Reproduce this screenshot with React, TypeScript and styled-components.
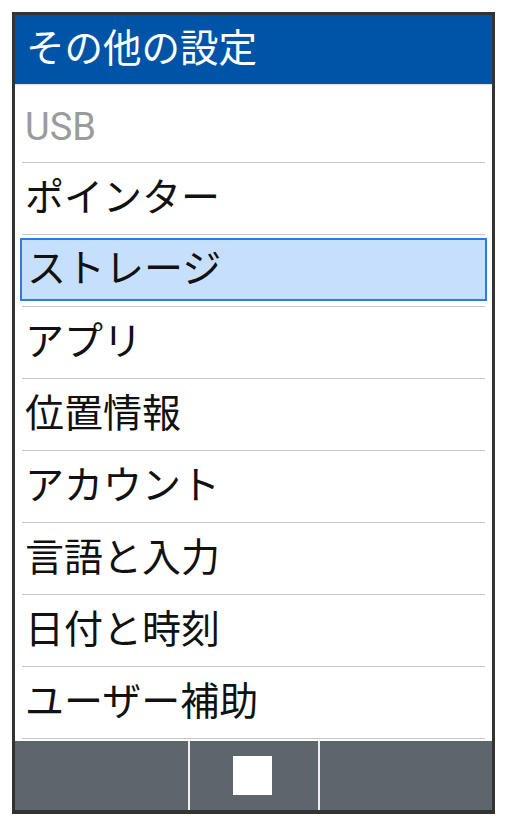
import React from "react";
import styled, { createGlobalStyle } from "styled-components";

const GlobalStyle = createGlobalStyle`
  html, body { margin: 0; padding: 0; background: #ffffff; }
  body { font-family: Roboto, "Noto Sans CJK JP", sans-serif; }
`;

const Frame = styled.div`
  margin: 12px 0 0 12px;
  width: 477px;
  height: 795px;
  border: 3px solid #333333;
  border-bottom-width: 4px;
  display: flex;
  flex-direction: column;
  background: #ffffff;
  overflow: hidden;
`;

const Header = styled.header`
  height: 69px;
  flex: none;
  background: #0054a7;
  display: flex;
  align-items: center;
  padding-left: 11px;
  box-shadow: 0 1px 1px rgba(0, 0, 0, 0.12);
  position: relative;
  z-index: 1;
`;

const Title = styled.h1`
  margin: 0;
  font-family: Roboto, "Noto Sans CJK JP", sans-serif;
  font-weight: 400;
  font-size: 38.5px;
  line-height: 1;
  color: #ffffff;
`;

const List = styled.ul`
  list-style: none;
  margin: 0;
  padding: 7px 0 2px;
  flex: 1;
`;

const Item = styled.li`
  height: 71px;
  margin: 0 7px;
  border-bottom: 1px solid #c3c7c7;
  display: flex;
  align-items: center;
`;

const Label = styled.div<{ $selected?: boolean; $disabled?: boolean }>`
  flex: 1;
  box-sizing: border-box;
  height: ${(p) => (p.$selected ? "63px" : "auto")};
  margin: ${(p) => (p.$selected ? "-2px -2px 0" : "0")};
  padding-left: ${(p) => (p.$selected ? "5px" : "1px")};
  border: 2px solid ${(p) => (p.$selected ? "#2a7ce0" : "transparent")};
  background: ${(p) => (p.$selected ? "#c6dffd" : "transparent")};
  display: flex;
  align-items: center;
  font-family: Roboto, "Noto Sans CJK JP", sans-serif;
  font-size: ${(p) => (p.$disabled ? "38px" : "39px")};
  line-height: 1;
  color: ${(p) => (p.$disabled ? "#9b9b9b" : "#111111")};
`;

const Bar = styled.footer`
  height: 69px;
  flex: none;
  background: #5f666b;
  display: grid;
  grid-template-columns: 173px 132px 1fr;
`;

const BarSlot = styled.div<{ $middle?: boolean }>`
  display: flex;
  align-items: center;
  justify-content: center;
  border-left: ${(p) => (p.$middle ? "2px solid #eef0f0" : "none")};
  border-right: ${(p) => (p.$middle ? "2px solid #eef0f0" : "none")};
`;

const StopSquare = styled.div`
  width: 39px;
  height: 39px;
  background: #ffffff;
  margin-right: 3px;
`;

const items = [
  { label: "USB", disabled: true },
  { label: "ポインター" },
  { label: "ストレージ", selected: true },
  { label: "アプリ" },
  { label: "位置情報" },
  { label: "アカウント" },
  { label: "言語と入力" },
  { label: "日付と時刻" },
  { label: "ユーザー補助" },
];

export default function App() {
  return (
    <>
      <GlobalStyle />
      <Frame>
        <Header>
          <Title>その他の設定</Title>
        </Header>
        <List>
          {items.map((it) => (
            <Item key={it.label}>
              <Label $selected={it.selected} $disabled={it.disabled}>
                {it.label}
              </Label>
            </Item>
          ))}
        </List>
        <Bar>
          <BarSlot />
          <BarSlot $middle>
            <StopSquare />
          </BarSlot>
          <BarSlot />
        </Bar>
      </Frame>
    </>
  );
}
